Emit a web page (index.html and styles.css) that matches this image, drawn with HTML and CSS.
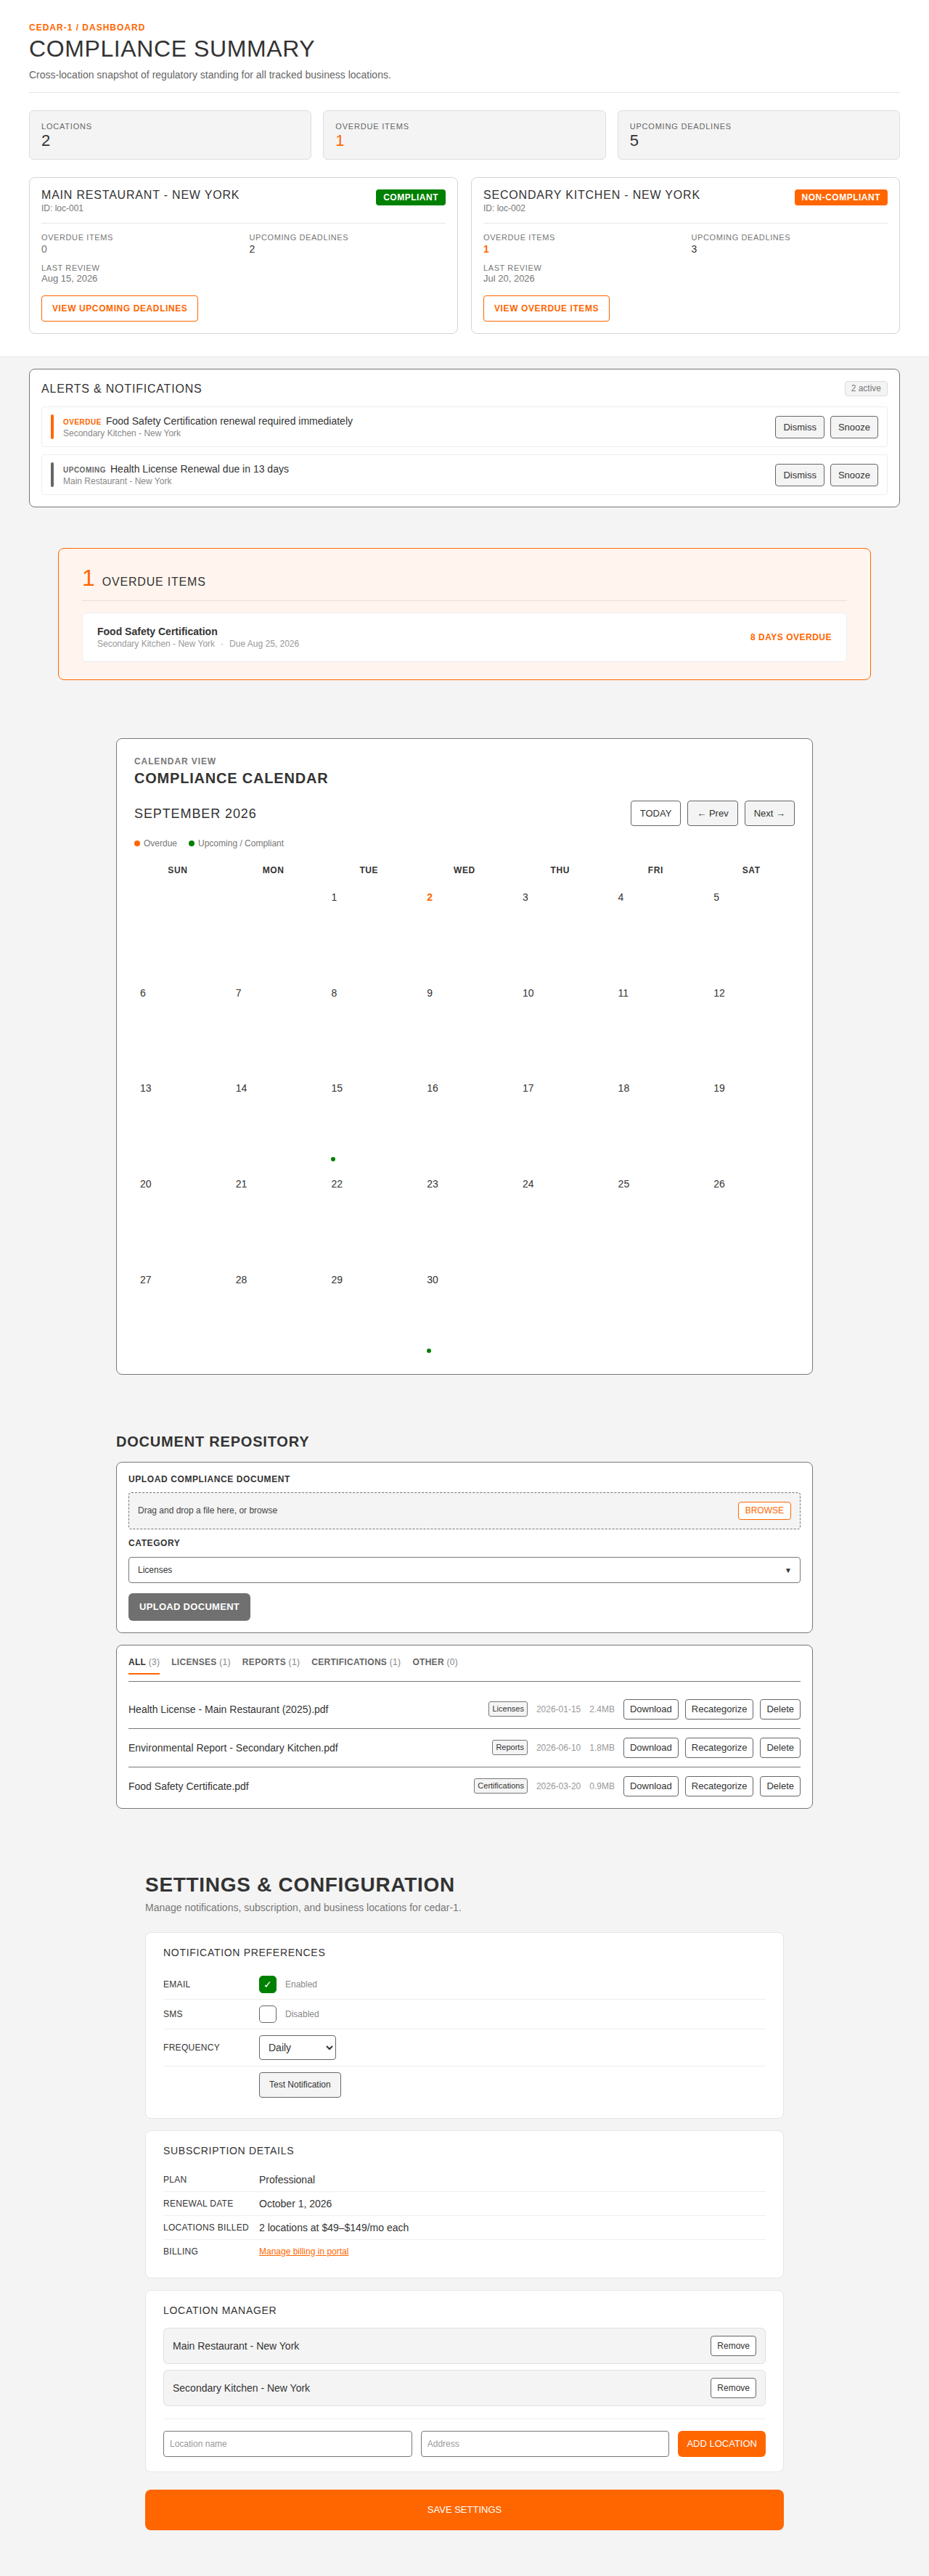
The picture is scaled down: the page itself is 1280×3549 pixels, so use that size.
FILE: index.html
```html
<!DOCTYPE html>
<html lang="en">
<head>
<meta charset="utf-8">
<title>Compliance Summary</title>
<link rel="stylesheet" href="styles.css">
</head>
<body>
<header class="top">
  <div class="summary-head">
    <div class="crumb">CEDAR-1 / DASHBOARD</div>
    <h1 class="page-title">COMPLIANCE SUMMARY</h1>
    <p class="page-sub">Cross-location snapshot of regulatory standing for all tracked business locations.</p>
  </div>
  <div class="stats">
    <div class="stat"><div class="stat-label">Locations</div><div class="stat-value">2</div></div>
    <div class="stat"><div class="stat-label">Overdue Items</div><div class="stat-value orange">1</div></div>
    <div class="stat"><div class="stat-label">Upcoming Deadlines</div><div class="stat-value">5</div></div>
  </div>
  <div class="locations">
    <div class="loc-card">
      <div class="loc-head">
        <div>
          <div class="loc-name">MAIN RESTAURANT - NEW YORK</div>
          <div class="loc-id">ID: loc-001</div>
        </div>
        <span class="badge badge-green">COMPLIANT</span>
      </div>
      <div class="loc-stats">
        <div><div class="loc-label">Overdue Items</div><div class="loc-value muted">0</div></div>
        <div><div class="loc-label">Upcoming Deadlines</div><div class="loc-value">2</div></div>
        <div><div class="loc-label">Last Review</div><div class="loc-date">Aug 15, 2026</div></div>
      </div>
      <button class="btn-orange-out">VIEW UPCOMING DEADLINES</button>
    </div>
    <div class="loc-card">
      <div class="loc-head">
        <div>
          <div class="loc-name">SECONDARY KITCHEN - NEW YORK</div>
          <div class="loc-id">ID: loc-002</div>
        </div>
        <span class="badge badge-orange">NON-COMPLIANT</span>
      </div>
      <div class="loc-stats">
        <div><div class="loc-label">Overdue Items</div><div class="loc-value orange bold">1</div></div>
        <div><div class="loc-label">Upcoming Deadlines</div><div class="loc-value">3</div></div>
        <div><div class="loc-label">Last Review</div><div class="loc-date">Jul 20, 2026</div></div>
      </div>
      <button class="btn-orange-out">VIEW OVERDUE ITEMS</button>
    </div>
  </div>
</header>

<section class="alerts">
  <div class="alerts-head">
    <div class="alerts-title">ALERTS &amp; NOTIFICATIONS</div>
    <span class="count-badge">2 active</span>
  </div>
  <div class="alert-item">
    <span class="alert-bar bar-orange"></span>
    <div class="alert-body">
      <div class="alert-main"><span class="alert-tag orange">OVERDUE</span>Food Safety Certification renewal required immediately</div>
      <div class="alert-sub">Secondary Kitchen - New York</div>
    </div>
    <div class="alert-actions">
      <button class="btn-soft">Dismiss</button>
      <button class="btn-soft">Snooze</button>
    </div>
  </div>
  <div class="alert-item">
    <span class="alert-bar bar-grey"></span>
    <div class="alert-body">
      <div class="alert-main"><span class="alert-tag grey">UPCOMING</span>Health License Renewal due in 13 days</div>
      <div class="alert-sub">Main Restaurant - New York</div>
    </div>
    <div class="alert-actions">
      <button class="btn-soft">Dismiss</button>
      <button class="btn-soft">Snooze</button>
    </div>
  </div>
</section>

<section class="overdue">
  <div class="overdue-head">
    <span class="overdue-num">1</span>
    <span class="overdue-title">OVERDUE ITEMS</span>
  </div>
  <div class="od-item">
    <div>
      <div class="od-name">Food Safety Certification</div>
      <div class="od-sub">Secondary Kitchen - New York<span class="od-sep">·</span>Due Aug 25, 2026</div>
    </div>
    <div class="od-days">8 DAYS OVERDUE</div>
  </div>
</section>

<section class="calendar">
  <div class="cal-kicker">CALENDAR VIEW</div>
  <h2 class="cal-title">COMPLIANCE CALENDAR</h2>
  <div class="cal-bar">
    <div class="cal-month">SEPTEMBER 2026</div>
    <div class="cal-nav">
      <button class="btn-cal btn-white">TODAY</button>
      <button class="btn-cal">← Prev</button>
      <button class="btn-cal">Next →</button>
    </div>
  </div>
  <div class="cal-legend">
    <span class="legend-item"><span class="dot dot-orange"></span>Overdue</span>
    <span class="legend-item"><span class="dot dot-green"></span>Upcoming / Compliant</span>
  </div>
  <div class="cal-grid">
    <div class="cal-week">
      <div>SUN</div><div>MON</div><div>TUE</div><div>WED</div><div>THU</div><div>FRI</div><div>SAT</div>
    </div>
    <div class="cal-days">
      <div class="cal-cell"></div>
      <div class="cal-cell"></div>
      <div class="cal-cell"><span class="cal-num">1</span></div>
      <div class="cal-cell"><span class="cal-num today">2</span></div>
      <div class="cal-cell"><span class="cal-num">3</span></div>
      <div class="cal-cell"><span class="cal-num">4</span></div>
      <div class="cal-cell"><span class="cal-num">5</span></div>
      <div class="cal-cell"><span class="cal-num">6</span></div>
      <div class="cal-cell"><span class="cal-num">7</span></div>
      <div class="cal-cell"><span class="cal-num">8</span></div>
      <div class="cal-cell"><span class="cal-num">9</span></div>
      <div class="cal-cell"><span class="cal-num">10</span></div>
      <div class="cal-cell"><span class="cal-num">11</span></div>
      <div class="cal-cell"><span class="cal-num">12</span></div>
      <div class="cal-cell"><span class="cal-num">13</span></div>
      <div class="cal-cell"><span class="cal-num">14</span></div>
      <div class="cal-cell"><span class="cal-num">15</span><span class="cal-dot"></span></div>
      <div class="cal-cell"><span class="cal-num">16</span></div>
      <div class="cal-cell"><span class="cal-num">17</span></div>
      <div class="cal-cell"><span class="cal-num">18</span></div>
      <div class="cal-cell"><span class="cal-num">19</span></div>
      <div class="cal-cell"><span class="cal-num">20</span></div>
      <div class="cal-cell"><span class="cal-num">21</span></div>
      <div class="cal-cell"><span class="cal-num">22</span></div>
      <div class="cal-cell"><span class="cal-num">23</span></div>
      <div class="cal-cell"><span class="cal-num">24</span></div>
      <div class="cal-cell"><span class="cal-num">25</span></div>
      <div class="cal-cell"><span class="cal-num">26</span></div>
      <div class="cal-cell"><span class="cal-num">27</span></div>
      <div class="cal-cell"><span class="cal-num">28</span></div>
      <div class="cal-cell"><span class="cal-num">29</span></div>
      <div class="cal-cell"><span class="cal-num">30</span><span class="cal-dot"></span></div>
      <div class="cal-cell"></div>
      <div class="cal-cell"></div>
      <div class="cal-cell"></div>
    </div>
  </div>
</section>

<section class="docs">
  <h2 class="section-title">DOCUMENT REPOSITORY</h2>
  <div class="panel-dark">
    <div class="upload-label">UPLOAD COMPLIANCE DOCUMENT</div>
    <div class="dropzone">
      <span>Drag and drop a file here, or browse</span>
      <button class="browse">BROWSE</button>
    </div>
    <div class="upload-label cat-label">CATEGORY</div>
    <div class="select-wrap">
      <select class="cat-select">
        <option>Licenses</option>
        <option>Reports</option>
        <option>Certifications</option>
        <option>Other</option>
      </select>
    </div>
    <button class="upload-btn">UPLOAD DOCUMENT</button>
  </div>
  <div class="panel-dark doc-list">
    <div class="tabs">
      <span class="tab active">ALL <span class="count">(3)</span></span>
      <span class="tab">LICENSES <span class="count">(1)</span></span>
      <span class="tab">REPORTS <span class="count">(1)</span></span>
      <span class="tab">CERTIFICATIONS <span class="count">(1)</span></span>
      <span class="tab">OTHER <span class="count">(0)</span></span>
    </div>
    <div class="doc-rows">
      <div class="doc-row">
        <div class="doc-name">Health License - Main Restaurant (2025).pdf</div>
        <div class="doc-meta">
          <span class="tag">Licenses</span>
          <span class="meta-text">2026-01-15</span>
          <span class="meta-text">2.4MB</span>
          <div class="doc-btns">
            <button class="btn-out">Download</button>
            <button class="btn-out">Recategorize</button>
            <button class="btn-out">Delete</button>
          </div>
        </div>
      </div>
      <div class="doc-row">
        <div class="doc-name">Environmental Report - Secondary Kitchen.pdf</div>
        <div class="doc-meta">
          <span class="tag">Reports</span>
          <span class="meta-text">2026-06-10</span>
          <span class="meta-text">1.8MB</span>
          <div class="doc-btns">
            <button class="btn-out">Download</button>
            <button class="btn-out">Recategorize</button>
            <button class="btn-out">Delete</button>
          </div>
        </div>
      </div>
      <div class="doc-row">
        <div class="doc-name">Food Safety Certificate.pdf</div>
        <div class="doc-meta">
          <span class="tag">Certifications</span>
          <span class="meta-text">2026-03-20</span>
          <span class="meta-text">0.9MB</span>
          <div class="doc-btns">
            <button class="btn-out">Download</button>
            <button class="btn-out">Recategorize</button>
            <button class="btn-out">Delete</button>
          </div>
        </div>
      </div>
    </div>
  </div>
</section>

<section class="settings">
  <h2 class="settings-title">SETTINGS &amp; CONFIGURATION</h2>
  <p class="settings-sub">Manage notifications, subscription, and business locations for cedar-1.</p>

  <div class="card-soft first">
    <div class="card-title">NOTIFICATION PREFERENCES</div>
    <div class="set-row">
      <div class="set-label">EMAIL</div>
      <span class="check checked">✓</span>
      <span class="check-text">Enabled</span>
    </div>
    <div class="set-row">
      <div class="set-label">SMS</div>
      <span class="check"></span>
      <span class="check-text">Disabled</span>
    </div>
    <div class="set-row">
      <div class="set-label">FREQUENCY</div>
      <select class="freq-select">
        <option>Daily</option>
        <option>Weekly</option>
      </select>
    </div>
    <div class="set-row">
      <div class="set-label"></div>
      <button class="btn-test">Test Notification</button>
    </div>
  </div>

  <div class="card-soft">
    <div class="card-title">SUBSCRIPTION DETAILS</div>
    <div class="set-row">
      <div class="set-label">PLAN</div>
      <div class="set-value">Professional</div>
    </div>
    <div class="set-row">
      <div class="set-label">RENEWAL DATE</div>
      <div class="set-value">October 1, 2026</div>
    </div>
    <div class="set-row">
      <div class="set-label">LOCATIONS BILLED</div>
      <div class="set-value">2 locations at $49–$149/mo each</div>
    </div>
    <div class="set-row">
      <div class="set-label">BILLING</div>
      <a class="billing-link" href="#">Manage billing in portal</a>
    </div>
  </div>

  <div class="card-soft">
    <div class="card-title">LOCATION MANAGER</div>
    <div class="loc-item">
      <span>Main Restaurant - New York</span>
      <button class="btn-remove">Remove</button>
    </div>
    <div class="loc-item">
      <span>Secondary Kitchen - New York</span>
      <button class="btn-remove">Remove</button>
    </div>
    <div class="add-form">
      <input class="text-input" type="text" placeholder="Location name">
      <input class="text-input" type="text" placeholder="Address">
      <button class="btn-add">ADD LOCATION</button>
    </div>
  </div>

  <button class="btn-save">SAVE SETTINGS</button>
</section>
</body>
</html>
```

FILE: styles.css
```css
* { box-sizing: border-box; }

body {
  margin: 0;
  background: #f4f4f4;
  font-family: "Liberation Sans", Arial, Helvetica, sans-serif;
  color: #333;
}

button, input, select {
  font-family: "Liberation Sans", Arial, Helvetica, sans-serif;
  color: #333;
}

.orange { color: #ff6600; }
.bold { font-weight: 700; }
.muted { color: #777; }

/* ---------- top summary ---------- */
.top {
  background: #fff;
  border-bottom: 1px solid #e8e8e8;
  padding: 30px 40px 31px;
}

.summary-head {
  padding-bottom: 14px;
  border-bottom: 1px solid #e6e6e6;
}

.crumb {
  font-size: 12px;
  line-height: 16px;
  font-weight: 700;
  color: #ff6600;
  letter-spacing: 1px;
}

.page-title {
  margin: 4px 0 0;
  font-size: 32px;
  line-height: 35px;
  font-weight: 400;
  letter-spacing: 0.6px;
  color: #333;
}

.page-sub {
  margin: 8px 0 0;
  font-size: 14px;
  line-height: 20px;
  color: #666;
}

.stats {
  display: grid;
  grid-template-columns: repeat(3, 1fr);
  gap: 16px;
  margin-top: 24px;
}

.stat {
  background: #f4f4f4;
  border: 1px solid #ddd;
  border-radius: 6px;
  padding: 14px 16px;
}

.stat-label {
  font-size: 11px;
  line-height: 14px;
  letter-spacing: 0.8px;
  color: #666;
  text-transform: uppercase;
}

.stat-value {
  margin-top: 2px;
  font-size: 22px;
  line-height: 22px;
}

.locations {
  display: grid;
  grid-template-columns: 1fr 1fr;
  gap: 18px;
  margin-top: 24px;
}

.loc-card {
  background: #fff;
  border: 1px solid #d4d4d4;
  border-radius: 8px;
  padding: 16px;
}

.loc-head {
  display: flex;
  justify-content: space-between;
  align-items: flex-start;
  padding-bottom: 12px;
  border-bottom: 1px solid #e6e6e6;
}

.loc-name {
  font-size: 16px;
  line-height: 16px;
  letter-spacing: 0.8px;
  color: #333;
}

.loc-id {
  margin-top: 3px;
  font-size: 12px;
  line-height: 15px;
  color: #777;
}

.badge {
  font-size: 12px;
  line-height: 14px;
  font-weight: 700;
  color: #fff;
  padding: 4px 10px;
  border-radius: 4px;
  letter-spacing: 0.5px;
}

.badge-green { background: #008000; }
.badge-orange { background: #ff6600; }

.loc-stats {
  display: grid;
  grid-template-columns: 1fr 1fr;
  gap: 10px 16px;
  margin-top: 12px;
}

.loc-label {
  font-size: 11px;
  line-height: 14px;
  letter-spacing: 0.6px;
  color: #777;
  text-transform: uppercase;
}

.loc-value {
  font-size: 14px;
  line-height: 18px;
}

.loc-date {
  font-size: 13px;
  line-height: 15px;
  color: #777;
}

.btn-orange-out {
  margin-top: 16px;
  background: #fff;
  border: 1px solid #ff6600;
  border-radius: 4px;
  color: #ff6600;
  font-size: 12px;
  line-height: 14px;
  font-weight: 700;
  letter-spacing: 0.6px;
  padding: 10px 14px;
}

/* ---------- alerts ---------- */
.alerts {
  margin: 16px 40px 0;
  background: #fff;
  border: 1px solid #777;
  border-radius: 8px;
  padding: 16px;
}

.alerts-head {
  display: flex;
  justify-content: space-between;
  align-items: center;
  margin-bottom: 14px;
}

.alerts-title {
  font-size: 16px;
  line-height: 18px;
  letter-spacing: 0.8px;
}

.count-badge {
  font-size: 12px;
  line-height: 15px;
  padding: 2px 8px;
  background: #f4f4f4;
  border: 1px solid #ddd;
  border-radius: 4px;
  color: #777;
}

.alert-item {
  display: flex;
  align-items: center;
  gap: 13px;
  border: 1px solid #eee;
  border-radius: 4px;
  padding: 10px 12px;
}

.alert-item + .alert-item { margin-top: 10px; }

.alert-bar {
  width: 4px;
  align-self: stretch;
  border-radius: 2px;
}

.bar-orange { background: #ff6600; }
.bar-grey { background: #666; }

.alert-body { flex: 1; }

.alert-main {
  font-size: 14px;
  line-height: 18px;
  height: 18px;
  color: #333;
}

.alert-tag {
  font-size: 10px;
  line-height: 10px;
  font-weight: 700;
  letter-spacing: 0.5px;
  margin-right: 6px;
}

.alert-tag.grey { color: #666; }

.alert-sub {
  font-size: 12px;
  line-height: 16px;
  color: #888;
}

.alert-actions {
  display: flex;
  gap: 8px;
}

.btn-soft {
  font-size: 13px;
  line-height: 15px;
  padding: 7px 10px;
  background: #f4f4f4;
  border: 1px solid #666;
  border-radius: 4px;
}

/* ---------- overdue ---------- */
.overdue {
  width: 1120px;
  margin: 56px auto 0;
  background: #fff5ee;
  border: 1px solid #ff6600;
  border-radius: 8px;
  padding: 24px 32px;
}

.overdue-head {
  display: flex;
  align-items: baseline;
  gap: 10px;
  height: 48px;
  padding-bottom: 16px;
  border-bottom: 1px solid #e8dfd6;
}

.overdue-num {
  font-size: 32px;
  line-height: 32px;
  color: #ff6600;
}

.overdue-title {
  font-size: 16px;
  line-height: 16px;
  letter-spacing: 0.8px;
  color: #333;
}

.od-item {
  margin-top: 16px;
  background: #fff;
  border: 1px solid #eee;
  border-radius: 6px;
  padding: 16px 20px;
  display: flex;
  justify-content: space-between;
  align-items: center;
}

.od-name {
  font-size: 14px;
  line-height: 18px;
  font-weight: 700;
}

.od-sub {
  font-size: 12px;
  line-height: 16px;
  color: #999;
}

.od-sep { margin: 0 8px; }

.od-days {
  font-size: 12px;
  font-weight: 700;
  letter-spacing: 0.5px;
  color: #ff6600;
}

/* ---------- calendar ---------- */
.calendar {
  width: 960px;
  margin: 80px auto 0;
  background: #fff;
  border: 1px solid #777;
  border-radius: 8px;
  padding: 24px 24px 22px;
}

.cal-kicker {
  font-size: 12px;
  line-height: 14px;
  font-weight: 700;
  letter-spacing: 0.9px;
  color: #777;
}

.cal-title {
  margin: 4px 0 0;
  font-size: 20px;
  line-height: 24px;
  font-weight: 700;
  letter-spacing: 0.8px;
}

.cal-bar {
  margin-top: 19px;
  display: flex;
  justify-content: space-between;
  align-items: center;
}

.cal-month {
  font-size: 18px;
  line-height: 22px;
  letter-spacing: 0.9px;
}

.cal-nav {
  display: flex;
  gap: 9px;
}

.btn-cal {
  font-size: 13px;
  line-height: 17px;
  padding: 8px 12px;
  background: #f4f4f4;
  border: 1px solid #666;
  border-radius: 4px;
}

.btn-cal.btn-white { background: #fff; }

.cal-legend {
  margin-top: 16px;
  display: flex;
  gap: 16px;
  font-size: 12px;
  line-height: 16px;
  color: #777;
}

.legend-item {
  display: inline-flex;
  align-items: center;
  gap: 5px;
}

.dot {
  width: 8px;
  height: 8px;
  border-radius: 50%;
  display: inline-block;
}

.dot-orange { background: #ff6600; }
.dot-green { background: #008000; }

.cal-grid {
  margin: 16px -4px 0;
}

.cal-week {
  display: grid;
  grid-template-columns: repeat(7, 1fr);
  gap: 4px;
}

.cal-week div {
  text-align: center;
  font-size: 12px;
  line-height: 16px;
  font-weight: 700;
  letter-spacing: 0.6px;
  padding: 5px 0;
}

.cal-days {
  display: grid;
  grid-template-columns: repeat(7, 1fr);
  gap: 4px;
  margin-top: 4px;
}

.cal-cell {
  aspect-ratio: 1 / 1;
  padding: 10px 12px 7px;
  display: flex;
  flex-direction: column;
  align-items: flex-start;
}

.cal-num {
  font-size: 14px;
  line-height: 20px;
  color: #333;
}

.cal-num.today {
  color: #ff6600;
  font-weight: 700;
}

.cal-dot {
  margin-top: auto;
  width: 6px;
  height: 6px;
  border-radius: 50%;
  background: #008000;
}

/* ---------- documents ---------- */
.docs {
  width: 960px;
  margin: 80px auto 0;
}

.section-title {
  margin: 0 0 16px;
  font-size: 20px;
  line-height: 24px;
  font-weight: 700;
  letter-spacing: 0.8px;
}

.panel-dark {
  background: #fff;
  border: 1px solid #777;
  border-radius: 8px;
  padding: 16px;
}

.upload-label {
  font-size: 12px;
  line-height: 15px;
  font-weight: 700;
  letter-spacing: 0.6px;
  margin-bottom: 10px;
}

.cat-label {
  margin: 12px 0 11px;
}

.dropzone {
  display: flex;
  justify-content: space-between;
  align-items: center;
  border: 1px dashed #777;
  border-radius: 4px;
  background: #f4f4f4;
  padding: 12px;
  font-size: 12px;
  color: #444;
}

.browse {
  font-size: 12px;
  line-height: 15px;
  padding: 4px 9px;
  background: #fff;
  border: 1px solid #ff6600;
  border-radius: 4px;
  color: #ff6600;
}

.select-wrap {
  position: relative;
}

.select-wrap::after {
  content: "▼";
  position: absolute;
  right: 12px;
  top: 50%;
  transform: translateY(-50%);
  font-size: 10px;
  color: #333;
  pointer-events: none;
}

.cat-select {
  display: block;
  width: 100%;
  height: 36px;
  appearance: none;
  -webkit-appearance: none;
  background: #fff;
  border: 1px solid #777;
  border-radius: 4px;
  padding: 0 12px;
  font-size: 12px;
}

.upload-btn {
  margin-top: 14px;
  background: #707070;
  color: #fff;
  border: none;
  border-radius: 6px;
  font-size: 13px;
  line-height: 16px;
  font-weight: 700;
  letter-spacing: 0.3px;
  padding: 11px 15px;
}

.doc-list {
  margin-top: 16px;
}

.tabs {
  display: flex;
  gap: 16px;
  padding-bottom: 9px;
  border-bottom: 1px solid #777;
}

.tab {
  font-size: 12px;
  line-height: 14px;
  font-weight: 700;
  letter-spacing: 0.3px;
  color: #666;
  padding-bottom: 8px;
  border-bottom: 2px solid transparent;
}

.tab .count {
  font-weight: 400;
  color: #888;
}

.tab.active {
  color: #333;
  border-bottom-color: #ff6600;
}

.doc-rows {
  margin-top: 12px;
}

.doc-row {
  display: flex;
  align-items: center;
  padding: 12px 0;
  border-bottom: 1px solid #777;
}

.doc-row:last-child {
  border-bottom: none;
  padding-bottom: 0;
}

.doc-name {
  flex: 1;
  font-size: 14px;
  line-height: 18px;
}

.doc-meta {
  display: flex;
  align-items: center;
  gap: 12px;
}

.tag {
  font-size: 11px;
  line-height: 15px;
  padding: 2px 4px;
  background: #f4f4f4;
  border: 1px solid #777;
  border-radius: 3px;
}

.meta-text {
  font-size: 12px;
  color: #999;
}

.doc-btns {
  display: flex;
  gap: 9px;
}

.btn-out {
  font-size: 13px;
  line-height: 16px;
  padding: 5px 8px;
  background: #fff;
  border: 1px solid #666;
  border-radius: 4px;
}

/* ---------- settings ---------- */
.settings {
  width: 880px;
  margin: 88px auto 0;
  padding-bottom: 64px;
}

.settings-title {
  margin: 0;
  font-size: 28px;
  line-height: 34px;
  font-weight: 700;
  letter-spacing: 0.7px;
}

.settings-sub {
  margin: 4px 0 0;
  font-size: 14px;
  line-height: 20px;
  color: #777;
}

.card-soft {
  background: #fff;
  border: 1px solid #e6e6e6;
  border-radius: 8px;
  padding: 20px 24px;
  margin-top: 16px;
}

.card-soft.first { margin-top: 24px; }

.card-title {
  font-size: 14px;
  line-height: 14px;
  letter-spacing: 0.7px;
  margin-bottom: 17px;
}

.set-row {
  display: flex;
  align-items: center;
  padding: 8px 0;
  border-bottom: 1px solid #eee;
}

.set-row:last-child { border-bottom: none; }

.set-label {
  width: 120px;
  margin-right: 12px;
  flex: none;
  font-size: 12px;
  line-height: 16px;
  letter-spacing: 0.3px;
  color: #333;
}

.set-value {
  font-size: 14px;
  line-height: 16px;
}

.billing-link {
  font-size: 12px;
  line-height: 14px;
  color: #ff6600;
  text-decoration: underline;
}

.check {
  width: 24px;
  height: 24px;
  border-radius: 5px;
  border: 1px solid #666;
  background: #fff;
  display: inline-flex;
  align-items: center;
  justify-content: center;
  font-size: 14px;
  color: #fff;
}

.check.checked {
  background: #008000;
  border-color: #008000;
}

.check-text {
  margin-left: 12px;
  font-size: 12px;
  color: #888;
}

.freq-select {
  width: 106px;
  height: 34px;
  background: #fff;
  border: 1px solid #666;
  border-radius: 4px;
  padding: 0 8px;
  font-size: 14px;
}

.btn-test {
  font-size: 12px;
  line-height: 15px;
  padding: 9px 13px;
  background: #f4f4f4;
  border: 1px solid #666;
  border-radius: 4px;
}

.loc-item {
  display: flex;
  justify-content: space-between;
  align-items: center;
  background: #f4f4f4;
  border: 1px solid #e0e0e0;
  border-radius: 6px;
  padding: 10px 12px;
  font-size: 14px;
  line-height: 18px;
}

.loc-item + .loc-item { margin-top: 8px; }

.btn-remove {
  font-size: 12px;
  line-height: 14px;
  padding: 6px 8px;
  background: #fff;
  border: 1px solid #666;
  border-radius: 4px;
}

.add-form {
  display: flex;
  gap: 12px;
  margin-top: 17px;
  padding-top: 16px;
  border-top: 1px solid #eee;
}

.text-input {
  flex: 1;
  min-width: 0;
  height: 36px;
  border: 1px solid #777;
  border-radius: 4px;
  padding: 0 8px;
  font-size: 12px;
  background: #fff;
}

.text-input::placeholder { color: #999; }

.btn-add {
  height: 36px;
  padding: 0 12px;
  background: #ff6600;
  color: #fff;
  border: none;
  border-radius: 6px;
  font-size: 13px;
}

.btn-save {
  display: block;
  width: 100%;
  height: 56px;
  margin-top: 24px;
  background: #ff6600;
  color: #fff;
  border: none;
  border-radius: 8px;
  font-size: 13px;
}
```
